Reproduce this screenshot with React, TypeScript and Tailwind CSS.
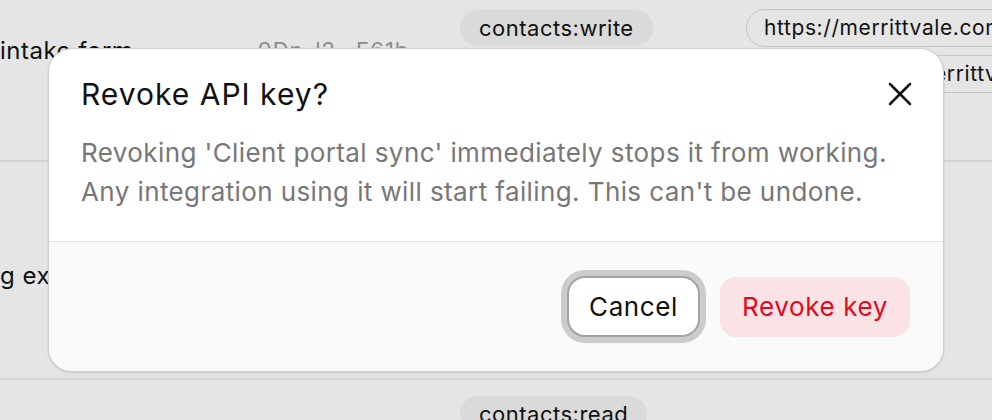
import { X } from 'lucide-react'

const chip =
  'inline-flex h-[36px] items-center rounded-full bg-[#dadada] px-[19px] text-[22px] tracking-[0.5px] whitespace-nowrap'
const urlChip =
  'inline-flex h-[38px] w-max items-center rounded-full border border-[#c6c6c6] px-[17px] text-[21px] tracking-[0.6px] whitespace-nowrap'

export default function App() {
  return (
    <div className="relative h-[420px] w-[992px] overflow-hidden bg-[#e5e5e5] font-['Inter',sans-serif] text-[#111]">
      {/* keys table behind the overlay */}
      <div className="flex flex-col">
        <div className="flex h-[162px] border-b-2 border-[#d3d3d3]">
          <div className="w-[258px] pt-[33px] text-[24px] tracking-[0.5px] whitespace-nowrap">intake form</div>
          <div className="w-[202px] pt-[34px] text-[22px] tracking-[1px] text-[#8c8c8c] whitespace-nowrap">
            9Dn_l2…E61b
          </div>
          <div className="w-[286px] pt-[10px]">
            <span className={chip}>contacts:write</span>
          </div>
          <div className="flex flex-1 flex-col gap-[8px] overflow-hidden pt-[9px]">
            <span className={urlChip}>https://merrittvale.com/intake</span>
            <span className={urlChip}>https://clients.merrittvale.com</span>
          </div>
        </div>
        <div className="flex h-[218px] border-b-2 border-[#d3d3d3]">
          <div className="w-[258px] pt-[96px] text-[24px] tracking-[0.5px] whitespace-nowrap">g export</div>
        </div>
        <div className="flex">
          <div className="w-[460px]" />
          <div className="pt-[16px]">
            <span className={chip}>contacts:read</span>
          </div>
        </div>
      </div>

      {/* revoke dialog */}
      <div className="absolute left-[48px] top-[48px] w-[896px] overflow-hidden rounded-[24px] border border-[#cfcfcf] bg-white shadow-sm">
        <div className="pl-[32px] pr-[23px] pt-[25px] pb-[30px]">
          <div className="flex items-center justify-between">
            <h2 className="text-[30px] leading-[36px] tracking-[1px] text-[#111]">Revoke API key?</h2>
            <button className="flex h-[40px] w-[40px] items-center justify-center text-[#111]">
              <X size={40} strokeWidth={1.5} />
            </button>
          </div>
          <p className="mt-[19px] text-[26px] leading-[39px] tracking-[0.4px] text-[#777777]">
            Revoking 'Client portal sync' immediately stops it from working.
            <br />
            Any integration using it will start failing. This can't be undone.
          </p>
        </div>
        <div className="flex h-[130px] items-center justify-end gap-[20px] border-t border-[#e3e3e3] bg-[#fafafa] pr-[33px]">
          <button className="flex h-[61px] w-[133px] items-center justify-center rounded-[18px] border-2 border-[#a3a3a3] bg-white text-[26px] tracking-[0.6px] text-[#111] ring-[6px] ring-[#cccccc]">
            Cancel
          </button>
          <button className="flex h-[60px] w-[190px] items-center justify-center rounded-[16px] bg-[#fbe3e5] text-[26px] tracking-[0.6px] text-[#df0a1e]">
            Revoke key
          </button>
        </div>
      </div>
    </div>
  )
}
